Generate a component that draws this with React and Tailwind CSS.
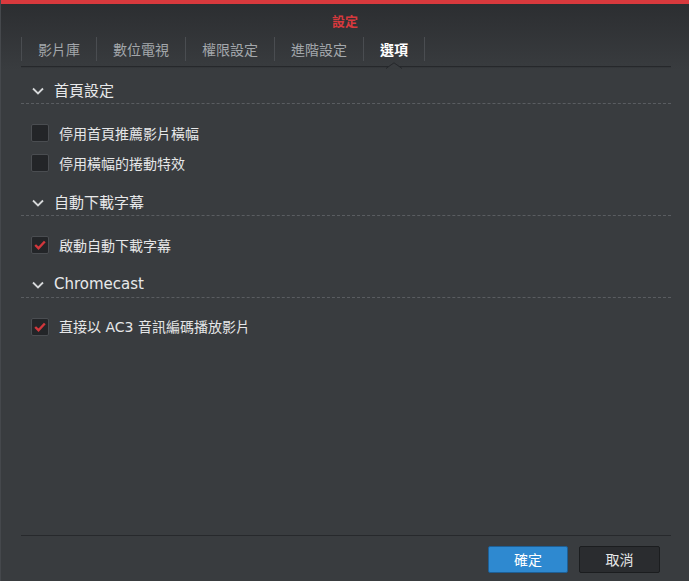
import React from "react";

const font = { fontFamily: '"Noto Sans CJK TC", "Noto Sans", sans-serif' };
const latinFont = { fontFamily: '"DejaVu Sans", "Noto Sans CJK TC", sans-serif' };

const tabs = ["影片庫", "數位電視", "權限設定", "進階設定", "選項"];

const sections = [
  {
    title: "首頁設定",
    items: [
      { label: "停用首頁推薦影片橫幅", checked: false },
      { label: "停用橫幅的捲動特效", checked: false },
    ],
  },
  {
    title: "自動下載字幕",
    items: [{ label: "啟動自動下載字幕", checked: true }],
  },
  {
    title: "Chromecast",
    latin: true,
    items: [{ label: "直接以 AC3 音訊編碼播放影片", checked: true, latin: true }],
  },
];

const Chevron = () => (
  <svg width="12" height="8" viewBox="0 0 12 8" className="shrink-0">
    <path d="M1 1.5 L6 6.5 L11 1.5" fill="none" stroke="#d6d8da" strokeWidth="1.8" />
  </svg>
);

const Checkbox = ({ checked }) => (
  <div className="w-[18px] h-[18px] rounded-[2px] border border-[#4a4d51] bg-[#232528] flex items-center justify-center shrink-0">
    {checked && (
      <svg width="12" height="10" viewBox="0 0 12 10">
        <path d="M1.2 5 L4.5 8.2 L10.8 1.5" fill="none" stroke="#d2373c" strokeWidth="2.4" />
      </svg>
    )}
  </div>
);

export default function App() {
  return (
    <div
      style={font}
      className="w-[689px] h-[581px] flex flex-col bg-gradient-to-b from-[#2b2d30] via-[#393c3f] via-[12%] to-[#393c3f] border-l border-[#45484c]"
    >
      <div className="h-[4px] bg-[#d8393d] shrink-0" />
      <div className="h-[33px] flex items-center justify-center text-[13px] font-bold text-[#d8393d]">
        設定
      </div>

      {/* tabs */}
      <div className="ml-[20px] mr-[18px] pb-[5px] border-b border-[#26282b] shadow-[0_1px_0_#34373a] relative flex">
        {tabs.map((t, i) => {
          const active = i === tabs.length - 1;
          return (
            <div
              key={t}
              className={`relative h-[24px] px-4 flex items-center border-l border-[#4a4d51] text-[14px] ${
                active ? "text-white font-bold" : "text-[#a3a7ab]"
              } ${active ? "border-r" : ""}`}
            >
              {t}
              {active && (
                <svg
                  width="16"
                  height="7"
                  viewBox="0 0 16 7"
                  className="absolute left-1/2 -translate-x-1/2 top-[25px]"
                >
                  <path d="M0 6.5 L8 0.8 L16 6.5" fill="#393c3f" stroke="#26282b" strokeWidth="1" />
                </svg>
              )}
            </div>
          );
        })}
      </div>

      {/* body */}
      <div className="flex-1 ml-[20px] mr-[18px] pt-[11px]">
        {sections.map((s, i) => (
          <div key={s.title} className={i > 0 ? "mt-[12px]" : ""}>
            <div className="h-[26px] flex items-center gap-[10px] pl-[11px] border-b border-dashed border-[#5a5d61] text-[15px] text-[#e8e9ea]">
              <Chevron />
              <span style={s.latin ? latinFont : undefined}>{s.title}</span>
            </div>
            <div className="pt-[14px]">
              {s.items.map((it) => (
                <div key={it.label} className="h-[30px] flex items-center gap-[10px] pl-[10px] text-[14px] text-[#e6e7e8]">
                  <Checkbox checked={it.checked} />
                  <span style={it.latin ? latinFont : undefined}>{it.label}</span>
                </div>
              ))}
            </div>
          </div>
        ))}
      </div>

      {/* footer */}
      <div className="ml-[20px] mr-[18px] border-t border-[#27292c] shadow-[0_1px_0_#414447_inset]" />
      <div className="h-[45px] flex items-start justify-end gap-[11px] pt-[10px] pr-[29px]">
        <button className="w-[80px] h-[27px] rounded-[2px] border border-[#1e5f95] bg-[#2e89d0] text-white text-[14px]">
          確定
        </button>
        <button className="w-[81px] h-[27px] rounded-[2px] border border-[#1b1d1f] bg-[#2a2c2f] text-[#e6e7e8] text-[14px]">
          取消
        </button>
      </div>
    </div>
  );
}
